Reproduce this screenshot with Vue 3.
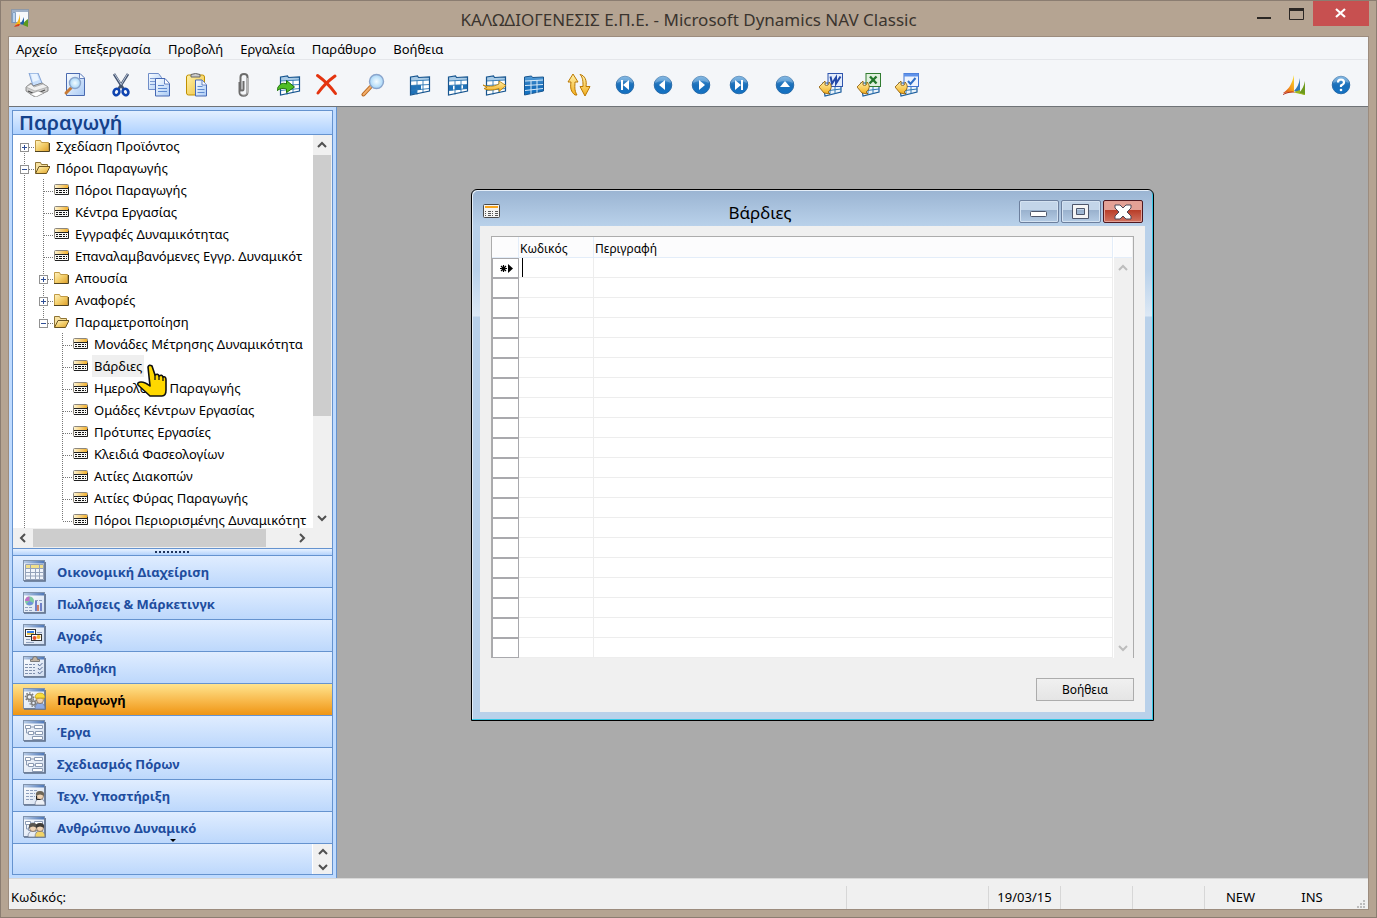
<script setup>
import { ref } from 'vue'

const menus = ['Αρχείο', 'Επεξεργασία', 'Προβολή', 'Εργαλεία', 'Παράθυρο', 'Βοήθεια']

const toolGroups = [
  ['print', 'preview'],
  ['cut', 'copy', 'paste'],
  ['clip'],
  ['insert', 'remove'],
  ['find'],
  ['tableFirst', 'tableMiddle', 'tableJump', 'tableFull'],
  ['refresh'],
  ['first', 'prev', 'next', 'last'],
  ['up'],
  ['word', 'excel', 'task'],
]

const names = {
  print: 'Εκτύπωση', preview: 'Προεπισκόπηση', cut: 'Αποκοπή', copy: 'Αντιγραφή', paste: 'Επικόλληση',
  clip: 'Συνημμένα', insert: 'Εισαγωγή', remove: 'Διαγραφή', find: 'Εύρεση', tableFirst: 'Φίλτρο πεδίου',
  tableMiddle: 'Φίλτρο πίνακα', tableJump: 'Φίλτρο ροής', tableFull: 'Εμφάνιση όλων', refresh: 'Ανανέωση',
  first: 'Πρώτο', prev: 'Προηγούμενο', next: 'Επόμενο', last: 'Τελευταίο', up: 'Λίστα',
  word: 'Word', excel: 'Excel', task: 'Εργασία',
}

const grid = (fill) => `
  <path d="M3.500 4l7-1 1 1.500 11-.5v14L3.500 22z" fill="#fff"/>
  <path d="M3.500 4l7-1 1 1.500 11-.5v3L3.500 8z" fill="#a9cbe6"/>
  ${fill}
  <path d="M3.500 8l19-1M3.500 12.500l19-1M3.500 17.500l19-2M10 7.500v14M16 7v13" fill="none" stroke="#2f78b4" stroke-width=".9"/>
  <path d="M3.500 4l7-1 1 1.500 11-.5v14L3.500 22z" fill="none" stroke="#17558f" stroke-width="1.200"/>`
const miniGrid = `
  <path d="M4 10h18v9L6 23z" fill="#eaf3fb" stroke="#1b5c9c" stroke-width="1.200"/>
  <path d="M6 18l16-2M11 12v10M16 12v9" stroke="#2f78b4" fill="none"/>`
const backArrow = `<path d="M0 14l6-6v4c3 1 4 0 4-3 4 4 2 8-1 10l2 2-6-1-5-6z" fill="url(#gold)" stroke="#8a5600" stroke-width=".8"/>`
const ball = '<circle cx="12" cy="12" r="8.800" fill="url(#ball)" stroke="#1a5e9e" stroke-width=".8"/><path d="M4 10a8 8 0 0 1 16 0q-8-4-16 0z" fill="#fff" opacity=".25"/>'
const lens = (x, y, r) => `<circle cx="${x}" cy="${y}" r="${r}" fill="url(#glass)" stroke="#8aa5cc" stroke-width="1.400"/>`

const icons = {
  print: `<path d="M4 0h9l4 10-9 3z" fill="#c7defb" stroke="#6f92cc" stroke-width=".8"/><path d="M6 1h6l2 6-6 2z" fill="#eaf4ff"/>
    <path d="M1 14l5-4 2 3 9-3 6 4v4l-13 6-9-6z" fill="#cfcfcf" stroke="#777" stroke-width=".8"/>
    <path d="M1 14l9 4 13-4-5-3-9 3-3-3z" fill="#f0f0f0" stroke="#999" stroke-width=".6"/>
    <path d="M3 18l7 3 10-4" fill="none" stroke="#4c4c4c" stroke-width="1.300"/><path d="M5 21l8-3 6 2-8 4z" fill="#fff" stroke="#888" stroke-width=".6"/>`,
  preview: `<path d="M3.500.5H17l4.500 4.500v17.500h-18z" fill="url(#page)" stroke="#4a6ab0"/><path d="M16.500 1v4.500h5" fill="#f5f9ff" stroke="#4a6ab0" stroke-width=".8"/>
    <path d="M8 15l-5 5" stroke="#c87a34" stroke-width="3" stroke-linecap="round"/>${lens(12, 10, 5.5)}`,
  cut: `<path d="M5 1l9.500 15M19 1L9.500 16" stroke="#43536f" stroke-width="2.600"/><path d="M5.500 1l7 11M18.500 1l-6 10" stroke="#c6d2e4" stroke-width=".9"/>
    <ellipse cx="7.500" cy="19" rx="2.800" ry="3.200" fill="none" stroke="#0f44b0" stroke-width="2.600" transform="rotate(30 7.500 19)"/>
    <ellipse cx="16.500" cy="19" rx="2.800" ry="3.200" fill="none" stroke="#0f44b0" stroke-width="2.600" transform="rotate(-30 16.500 19)"/>`,
  copy: `<path d="M1.500.5h10l3 4v12h-13z" fill="url(#page)" stroke="#6f8dc8"/><path d="M3 5.500h7M3 8.500h5M3 11.500h5" stroke="#7a9ad2"/>
    <path d="M8.500 5.500H18l4.500 5v12.500h-14z" fill="url(#page)" stroke="#4668b4"/><path d="M17.500 6v5h5" fill="#fff" stroke="#4668b4" stroke-width=".8"/><path d="M11 12.500h6M11 15.500h9M11 18.500h9" stroke="#5f8ad0"/>`,
  paste: `<rect x="1.500" y="2" width="18" height="20" rx="2" fill="url(#clipboard)" stroke="#c09000"/><path d="M6 4V1.500q4.500-2 9 0V4z" fill="#ccc" stroke="#666"/>
    <path d="M10.500 7H17l4.500 5v11h-11z" fill="url(#page)" stroke="#4668b4"/><path d="M17 7.500V12h4.500" fill="#fff" stroke="#4668b4" stroke-width=".8"/><path d="M12.500 13.500h5M12.500 16.500h7M12.500 19.500h7" stroke="#5f8ad0"/>`,
  clip: `<path d="M12.500 8v8c0 2-3 2-3 0V4c0-4 7-4 7 0v15c0 5-8 5-8 0V9" fill="none" stroke="#6c6c6c" stroke-width="2"/><path d="M16.500 5v14c0 4-7 4-7 0" fill="none" stroke="#d5d5d5" stroke-width=".7"/>`,
  insert: `${grid('')}<path d="M-.5 18c2-7 6-9 10-7V7.500l8 6.500-8 5.500V16c-3-1-6-1-10 2z" fill="#4fbe24" stroke="#1f720a"/>`,
  remove: `<path d="M2.500 2.500c7 5 13 11 18 18M20 3C13 8 8 13 3 20" fill="none" stroke="#e43410" stroke-width="3" stroke-linecap="round"/>`,
  find: `<path d="M9.500 14l-7 7.500" stroke="#b5651e" stroke-width="4" stroke-linecap="round"/><path d="M9.500 14l-7 7.500" stroke="#f3ad69" stroke-width="2" stroke-linecap="round"/>${lens(15.5, 8.5, 7)}`,
  tableFirst: grid('<path d="M4 12.500l6-.5v8.500l-6 1zM10 12h4v5h-4z" fill="#1f72b8"/>'),
  tableMiddle: grid('<path d="M4 12.500h4v5H4zM10 12h6v5h-6zM18 12h4v4h-4z" fill="#1f72b8"/>'),
  tableJump: `${grid('')}<path d="M0 12c5 2 10 2 16-1V8l7 4.500-7 6v-3c-6 2-12 2-15 0l3-1z" fill="url(#gold)" stroke="#b87b00" stroke-width=".8"/>`,
  tableFull: `<path d="M3.500 4l7-1 1 1.500 11-.5v14L3.500 22z" fill="url(#ball)" stroke="#17558f"/><path d="M4 8l18-1M4 12.500l18-1M4 17.500l18-2M10 7.500v14M16 7v13" fill="none" stroke="#d6eaf9"/>`,
  refresh: `<path d="M6 1L1 9h3c-1 6 0 10 4 13h2C7 17 8 13 8 9h3z" fill="url(#gold)" stroke="#bb7800"/>
    <path d="M13 1.500c5 1 7 6 6 12h4L18 23l-5-9.500h3c0-5 0-9-3-12z" fill="url(#gold)" stroke="#bb7800"/>`,
  first: `${ball}<path d="M8 7h2v10H8zM16 7v10l-6-5z" fill="#fff"/>`,
  prev: `${ball}<path d="M14 7v10l-6-5z" fill="#fff"/>`,
  next: `${ball}<path d="M10 7v10l6-5z" fill="#fff"/>`,
  last: `${ball}<path d="M14 7h2v10h-2zM8 7v10l6-5z" fill="#fff"/>`,
  up: `${ball}<path d="M7 14h10l-5-6z" fill="#fff"/>`,
  word: `${miniGrid}<rect x="9" y=".5" width="14.500" height="13" fill="#e3ecfb" stroke="#2f55ad"/><path d="M11.500 3.500l1.500 7 4-6v6l4.500-7" fill="none" stroke="#2449a8" stroke-width="2"/>${backArrow}`,
  excel: `${miniGrid}<rect x="9" y=".5" width="14.500" height="13" fill="#e0f0de" stroke="#317c31"/><path d="M13 3.500l6.500 7M19.500 3.500l-7 7" stroke="#24772b" stroke-width="2.400"/>${backArrow}`,
  task: `${miniGrid}<rect x="9" y=".5" width="14.500" height="13" fill="#eef4fd" stroke="#3f73d0"/><path d="M9 .5h14.500v3H9z" fill="#5f92ea"/><path d="M13 8l2.500 3 5-6" fill="none" stroke="#2f6fc8" stroke-width="2"/>${backArrow}`,
  dynamics: `<path d="M1 20c6-4 9-9 11-18v17z" fill="url(#sail)"/><path d="M12 18c3-3 5-7 6-13v15z" fill="#2f78b8"/><path d="M17 20c3-3 5-7 6-12v14z" fill="#6d9a1c"/><path d="M1 21c4-2 8-3 11-2l2 1c-5-1-9 0-13 2z" fill="#b5301a"/><path d="M12 19l6-2v3l5 1v1l-9-2z" fill="#9cb81c"/>`,
  help: `${ball}<path d="M9 9.500q0-3 3-3t3 3q0 1.500-3 3V14" fill="none" stroke="#fff" stroke-width="2.200"/><circle cx="12" cy="17" r="1.300" fill="#fff"/>`,
}

const tree = [
  { level: 0, kind: 'closed', text: 'Σχεδίαση Προϊόντος', start: true },
  { level: 0, kind: 'open', text: 'Πόροι Παραγωγής' },
  { level: 1, kind: 'form', text: 'Πόροι Παραγωγής' },
  { level: 1, kind: 'form', text: 'Κέντρα Εργασίας' },
  { level: 1, kind: 'form', text: 'Εγγραφές Δυναμικότητας' },
  { level: 1, kind: 'form', text: 'Επαναλαμβανόμενες Εγγρ. Δυναμικότ' },
  { level: 1, kind: 'closed', text: 'Απουσία' },
  { level: 1, kind: 'closed', text: 'Αναφορές' },
  { level: 1, kind: 'open', text: 'Παραμετροποίηση', end: true },
  { level: 2, kind: 'form', text: 'Μονάδες Μέτρησης Δυναμικότητα' },
  { level: 2, kind: 'form', text: 'Βάρδιες', selected: true },
  { level: 2, kind: 'form', text: 'Ημερολόγια Παραγωγής' },
  { level: 2, kind: 'form', text: 'Ομάδες Κέντρων Εργασίας' },
  { level: 2, kind: 'form', text: 'Πρότυπες Εργασίες' },
  { level: 2, kind: 'form', text: 'Κλειδιά Φασεολογίων' },
  { level: 2, kind: 'form', text: 'Αιτίες Διακοπών' },
  { level: 2, kind: 'form', text: 'Αιτίες Φύρας Παραγωγής' },
  { level: 2, kind: 'form', text: 'Πόροι Περιορισμένης Δυναμικότητ', end: true },
]

const nodeIcons = {
  closed: '<path d="M1.500 2.500h5l1 2h7v9h-13z" fill="url(#folder)" stroke="#c09a45"/><path d="M1 13.500h14.500V5" fill="none" stroke="#4f4220"/>',
  open: '<path d="M1.500 13V2.500h5l1 2h6V7" fill="#f7e1a0" stroke="#8f7434"/><path d="M1.500 13.500L5 6.500h11l-3.500 7z" fill="url(#folder)" stroke="#6b5420"/>',
  form: '<rect x="1.500" y="2.500" width="14" height="10" rx="1" fill="#f8f8f6" stroke="#8d877c"/><path d="M2 3h13v3H2z" fill="url(#amber)"/><path d="M2 12.500h13.500V5M2 6.500h13" fill="none" stroke="#222"/><path d="M3 8.500h11M3 10.500h11" stroke="#111" stroke-dasharray="2 1 3 1"/>',
}

const sheet = `<rect x=".5" y=".5" width="21" height="20" fill="url(#sheet)" stroke="#8093ad"/><path d="M1 1h20v2.500H1z" fill="url(#sheetbar)"/><path d="M1 21.200h21.200V2" fill="none" stroke="#5c6d88" stroke-width="1.300"/>`
const flow = `<path d="M2.500 5.500h5v3h-5zM11.500 5.500h8v3h-8zM5.500 11.500h5v3h-5zM12.500 11.500h7v3h-7zM9.500 16.500h10v3h-10z" fill="#fff" stroke="#8c9bb3"/><path d="M8 7h3M3.500 9v4h2M10.500 13h2" stroke="#8c9bb3" fill="none"/>`
const person = (x, y, hair, coat) => `<path d="M${x - 5} ${y + 9}q0-6 5-6t5 6z" fill="${coat}" stroke="#6e7890" stroke-width=".7"/><circle cx="${x}" cy="${y}" r="3.500" fill="#efd3b4" stroke="#5c4a3a" stroke-width=".6"/><path d="M${x - 4} ${y}q-1-5 4-5t4 5q-4-3-8 0z" fill="${hair}"/>`

const areas = ref([
  { text: 'Οικονομική Διαχείριση', icon: `${sheet}<path d="M2.500 5.500h18v14h-18z" fill="#f1f5fb"/><path d="M2 5h18v3H2z" fill="#f2e08a"/><path d="M2.500 4.500h18v15h-18zM2.500 8.500h18M2.500 12.500h18M2.500 16h18M7.500 5v14M12.500 8v11M16.500 5v14" fill="none" stroke="#94a2b9"/>` },
  { text: 'Πωλήσεις & Μάρκετινγκ', icon: `${sheet}<circle cx="6.500" cy="9" r="4.500" fill="#7fc9a0"/><path d="M6.500 9V4.500A4.500 4.500 0 0 0 2 9z" fill="#c06fc8"/><path d="M6.500 9l4 2a4.500 4.500 0 0 1-7 1z" fill="#6f8fe0"/><path d="M12 8.500h7M2 15.500h8M2 18.500h8" stroke="#8fa0bd" stroke-dasharray="3 1"/><path d="M12 9h2v10h-2zM17 11h2v8h-2z" fill="#6f80c8"/><path d="M14 13h2v6h-2z" fill="#d08068"/>` },
  { text: 'Αγορές', icon: `${sheet}<rect x="2.500" y="5.500" width="10" height="7" fill="#fff" stroke="#333"/><path d="M4 7h7v2H4z" fill="#3b7fe6"/><path d="M4 9h7v2H4z" fill="#f2c94c"/><rect x="8.500" y="10.500" width="10" height="6" fill="#fff" stroke="#333"/><circle cx="11.500" cy="14" r="2" fill="#e8522c"/><circle cx="15.500" cy="13" r="2" fill="#f2b430"/><path d="M14 8.500h5M3 15.500h4M3 18.500h8" stroke="#8fa0bd"/>` },
  { text: 'Αποθήκη', icon: `${sheet}<path d="M7.500 5.500v-2h2q0-3 2.500-3t2.500 3h2v2z" fill="#c3b5a4" stroke="#666" stroke-width=".8"/><path d="M2 8.500h10M2 11.500h10M2 14.500h10M2 17.500h10" stroke="#8090ad" stroke-dasharray="3 1"/><path d="M15 8l1.500 2 3-3M15 12l1.500 2 3-3M15 16l1.500 2 3-3" fill="none" stroke="#5a6d96"/>` },
  { text: 'Παραγωγή', active: true, icon: `${sheet}<circle cx="6.500" cy="9" r="2.500" fill="none" stroke="#7c7c7c" stroke-width="1.500"/><circle cx="6.500" cy="9" r="4" fill="none" stroke="#7c7c7c" stroke-width="1.500" stroke-dasharray="1.500 1.500"/><circle cx="10.500" cy="15" r="2" fill="none" stroke="#7c7c7c" stroke-width="1.500"/><circle cx="10.500" cy="15" r="3.500" fill="none" stroke="#7c7c7c" stroke-width="1.200" stroke-dasharray="1.500 1.500"/>${person(17, 12, '#d8b040', '#8fabe4')}<path d="M12 10q0-5 5-5t5 5z" fill="#f8dc3c" stroke="#b08c10" stroke-width=".6"/>` },
  { text: 'Έργα', icon: sheet + flow },
  { text: 'Σχεδιασμός Πόρων', icon: sheet + flow },
  { text: 'Τεχν. Υποστήριξη', icon: `${sheet}<path d="M3 6.500h11M3 9.500h9M3 12.500h9M3 15.500h8" stroke="#8fa0bd" stroke-dasharray="3 1"/>${person(17, 12, '#6e6658', '#eef1f6')}<path d="M13.500 12v3.500h4" fill="none" stroke="#222"/>` },
  { text: 'Ανθρώπινο Δυναμικό', icon: `${sheet}${flow}${person(10, 12, '#5a564f', '#e8edf5')}${person(17, 12, '#3d3a36', '#f2d468')}` },
])

const pick = (area) => areas.value.forEach((a) => { a.active = a === area })

const chevrons = {
  up: 'M1 7l4-4 4 4',
  down: 'M1 3l4 4 4-4',
  left: 'M7 1L3 5l4 4',
  right: 'M3 1l4 4-4 4',
}
const code = ref('')
</script>

<template>
  <div class="window">
    <svg class="defs" width="0" height="0" aria-hidden="true">
      <defs>
        <linearGradient id="ball" x1="0" y1="0" x2="0" y2="1"><stop offset="0" stop-color="#5aa2dc" /><stop offset=".5" stop-color="#1a6fba" /><stop offset="1" stop-color="#1272c4" /></linearGradient>
        <linearGradient id="gold" x1="0" y1="0" x2="0" y2="1"><stop offset="0" stop-color="#fff3b0" /><stop offset="1" stop-color="#f3ae1c" /></linearGradient>
        <linearGradient id="amber" x1="0" y1="0" x2="1" y2="0"><stop offset="0" stop-color="#fdf3cf" /><stop offset="1" stop-color="#f2b02e" /></linearGradient>
        <linearGradient id="page" x1="0" y1="0" x2="1" y2="1"><stop offset="0" stop-color="#fafdff" /><stop offset="1" stop-color="#a9caf5" /></linearGradient>
        <linearGradient id="clipboard" x1="0" y1="0" x2="1" y2="1"><stop offset="0" stop-color="#fff2a8" /><stop offset="1" stop-color="#eebf3c" /></linearGradient>
        <radialGradient id="glass"><stop offset="0" stop-color="#f4fcff" /><stop offset="1" stop-color="#a6d5f7" /></radialGradient>
        <linearGradient id="sail" x1="0" y1="1" x2="1" y2="0"><stop offset="0" stop-color="#c8381c" /><stop offset=".4" stop-color="#f28c1c" /><stop offset="1" stop-color="#fbe02c" /></linearGradient>
        <linearGradient id="folder" x1="0" y1="0" x2="1" y2="1"><stop offset="0" stop-color="#fff3c4" /><stop offset=".5" stop-color="#f3cf6c" /><stop offset="1" stop-color="#dfa02a" /></linearGradient>
        <linearGradient id="sheet" x1="0" y1="0" x2="1" y2="1"><stop offset="0" stop-color="#ffffff" /><stop offset="1" stop-color="#d0ddf0" /></linearGradient>
        <linearGradient id="sheetbar" x1="0" y1="0" x2="1" y2="0"><stop offset="0" stop-color="#b7cbe6" /><stop offset="1" stop-color="#4f78b8" /></linearGradient>
      </defs>
    </svg>

    <header class="titlebar">
      <svg class="app-icon" viewBox="0 0 18 18">
        <rect x=".5" y=".5" width="17" height="13" fill="#f7f9fc" stroke="#8e99a8" /><path d="M1 1h16v2H1z" fill="#9eb0c8" /><path d="M1.500 3.500h3v10h-3z" fill="#b9d2ef" stroke="#6f8fb4" stroke-width=".8" />
        <path d="M4 16c3-3 4-6 5-11v11z" fill="#f5b81c" /><path d="M9 15c2-2 3-5 4-7v8z" fill="#1f5fa8" /><path d="M12 16c1-3 3-5 5-6v8z" fill="#5c9a1c" /><path d="M3 18c2-3 4-3 6-3l-1 2z" fill="#d6401c" />
      </svg>
      <h1 class="app-title">ΚΑΛΩΔΙΟΓΕΝΕΣΙΣ Ε.Π.Ε. - Microsoft Dynamics NAV Classic</h1>
      <div class="window-buttons">
        <button type="button" aria-label="Ελαχιστοποίηση"><svg viewBox="0 0 16 12"><path d="M0 9h14v2H0z" fill="#2b2724" /></svg></button>
        <button type="button" aria-label="Μεγιστοποίηση"><svg viewBox="0 0 16 12"><path d="M.5 1h14v10.500H.5z" fill="none" stroke="#2b2724" /><path d="M0 0h15v3H0z" fill="#2b2724" /></svg></button>
        <button type="button" class="close" aria-label="Κλείσιμο"><svg viewBox="0 0 16 12"><path d="M3 1l9 8M12 1l-9 8" stroke="#fff" stroke-width="2.200" /></svg></button>
      </div>
    </header>

    <div class="client">
      <nav class="menubar">
        <button v-for="m in menus" :key="m" type="button">{{ m }}</button>
      </nav>

      <div class="toolbar">
        <div v-for="(group, i) in toolGroups" :key="i" class="tool-group">
          <button v-for="name in group" :key="name" type="button" :aria-label="names[name]">
            <svg viewBox="0 0 24 24" v-html="icons[name]" />
          </button>
        </div>
        <div class="tool-group end">
          <button type="button" aria-label="Microsoft Dynamics"><svg viewBox="0 0 24 24" v-html="icons.dynamics" /></button>
          <button type="button" aria-label="Βοήθεια"><svg viewBox="0 0 24 24" v-html="icons.help" /></button>
        </div>
      </div>

      <div class="workspace">
        <aside class="sidebar">
          <div class="panel">
            <h2 class="panel-title">Παραγωγή</h2>
            <div class="tree-area">
              <ul class="tree">
                <li v-for="(node, i) in tree" :key="i" class="node">
                  <span v-for="n in node.level" :key="n" class="cell" :class="{ rail: n === 1 }" />
                  <span class="cell joint" :class="{ rail: !node.end, start: node.start, end: node.end }">
                    <button v-if="node.kind !== 'form'" type="button" class="expander" :class="node.kind" :aria-label="node.text" />
                  </span>
                  <svg class="node-icon" viewBox="0 0 16 16" v-html="nodeIcons[node.kind]" />
                  <span class="label" :class="{ selected: node.selected }">
                    {{ node.text }}
                    <svg v-if="node.selected" class="pointer" viewBox="0 0 30 33">
                      <path d="M11 3q1-3 4-1l3 9q3-2 4 1 3-2 4 1 3-1 3 3v10q0 6-4 6h-12L1 21q-1-3 3-3 4 0 9 4z" fill="#ffd800" stroke="#111" stroke-width="1.600" stroke-linejoin="round" />
                      <path d="M18 10v6M22 11v5M26 13v4" stroke="#111" stroke-width="1.300" />
                    </svg>
                  </span>
                </li>
              </ul>
              <div class="vscroll">
                <button type="button" aria-label="Πάνω"><svg viewBox="0 0 10 10"><path :d="chevrons.up" /></svg></button>
                <span class="vthumb" />
                <button type="button" aria-label="Κάτω"><svg viewBox="0 0 10 10"><path :d="chevrons.down" /></svg></button>
              </div>
            </div>
            <div class="hscroll">
              <button type="button" aria-label="Αριστερά"><svg viewBox="0 0 10 10"><path :d="chevrons.left" /></svg></button>
              <span class="htrack"><span class="hthumb" /></span>
              <button type="button" aria-label="Δεξιά"><svg viewBox="0 0 10 10"><path :d="chevrons.right" /></svg></button>
            </div>
            <div class="splitter"><span class="grip" /></div>
            <nav class="areas">
              <button v-for="area in areas" :key="area.text" type="button" :class="{ active: area.active }" @click="pick(area)">
                <svg viewBox="0 0 24 24" v-html="area.icon" />
                <span>{{ area.text }}</span>
              </button>
              <span class="more" />
            </nav>
            <div class="panel-foot">
              <div class="spinner">
                <button type="button" aria-label="Προηγούμενα"><svg viewBox="0 0 10 10"><path :d="chevrons.up" /></svg></button>
                <button type="button" aria-label="Επόμενα"><svg viewBox="0 0 10 10"><path :d="chevrons.down" /></svg></button>
              </div>
            </div>
          </div>
        </aside>

        <main class="desktop">
          <section class="dialog" aria-label="Βάρδιες">
            <header class="dialog-bar">
              <svg class="dialog-icon" viewBox="0 0 18 16"><rect x=".5" y="1.500" width="16" height="13" rx="1" fill="#f4f4f2" stroke="#4a4a4a" /><path d="M2 3h13v2H2z" fill="#f9a51c" /><path d="M2 8.500h13M2 10.500h13M2 12.500h13" stroke="#555" stroke-dasharray="1 2 3 1" /></svg>
              <h2>Βάρδιες</h2>
              <div class="dialog-buttons">
                <button type="button" aria-label="Ελαχιστοποίηση"><svg viewBox="0 0 20 18"><rect x="1.500" y="8.500" width="16" height="5" rx="1" fill="#fff" stroke="#4d566b" /></svg></button>
                <button type="button" aria-label="Μεγιστοποίηση"><svg viewBox="0 0 20 18"><path d="M1.500 1.500h16v14h-16zM5.500 5.500v6h8v-6z" fill="#f5f5f5" fill-rule="evenodd" stroke="#4d566b" /></svg></button>
                <button type="button" class="close" aria-label="Κλείσιμο"><svg viewBox="0 0 20 18"><path d="M2 2h5l3 3 3-3h5v3l-4 4 4 4v3h-5l-3-3-3 3H2v-3l4-4-4-4z" fill="#fff" stroke="#4d4858" stroke-linejoin="round" /></svg></button>
              </div>
            </header>
            <div class="dialog-body">
              <div class="list">
                <table>
                  <thead>
                    <tr><th class="marker" /><th class="code">Κωδικός</th><th>Περιγραφή</th></tr>
                  </thead>
                  <tbody>
                    <tr v-for="r in 20" :key="r">
                      <td class="marker">
                        <svg v-if="r === 1" viewBox="0 0 14 10"><path d="M3.500 2v7M0 5.500h7M1 3l5 5M6 3L1 8" stroke="#000" stroke-width="1.200" /><path d="M8 1v9l5-4.500z" /></svg>
                      </td>
                      <td class="code">
                        <template v-if="r === 1"><input v-model="code" type="text" aria-label="Κωδικός" /><span class="caret" /></template>
                      </td>
                      <td />
                    </tr>
                  </tbody>
                </table>
                <div class="list-scroll">
                  <span class="scroll-head" />
                  <button type="button" aria-label="Πάνω"><svg viewBox="0 0 10 10"><path :d="chevrons.up" /></svg></button>
                  <button type="button" aria-label="Κάτω"><svg viewBox="0 0 10 10"><path :d="chevrons.down" /></svg></button>
                </div>
              </div>
              <button type="button" class="help">Βοήθεια</button>
            </div>
          </section>
        </main>
      </div>

      <footer class="statusbar">
        <span class="prompt">Κωδικός:</span>
        <span class="pane wide" /><span class="pane">19/03/15</span><span class="pane" /><span class="pane" />
        <span class="pane">NEW</span><span class="pane open">INS</span>
        <svg class="size-grip" viewBox="0 0 9 9"><path d="M6 0h2v2H6zM6 3h2v2H6zM3 3h2v2H3zM6 6h2v2H6zM3 6h2v2H3zM0 6h2v2H0z" fill="#bcbcbc" /></svg>
      </footer>
    </div>
  </div>
</template>

<style>
body { overflow: hidden; }
</style>

<style scoped>
* { box-sizing: border-box; }
.window {
  display: flex; flex-direction: column; height: 100vh; padding: 0 7px 7px;
  border: 1px solid #8b7d71; background: #b5a492; color: #000;
  font: 13px/18px "Noto Sans", "Open Sans", sans-serif;
}
.defs { position: absolute; }
button { margin: 0; padding: 0; border: 0; background: none; color: inherit; font: inherit; }
h1, h2 { margin: 0; font-weight: 400; }
svg { display: block; flex: none; }

.titlebar { display: grid; grid-template-columns: 1fr auto 1fr; flex: none; height: 35px; }
.app-icon { width: 18px; height: 18px; margin: 8px 0 0 3px; }
.app-title { font-size: 17px; line-height: 37px; color: #3a342e; white-space: nowrap; }
.window-buttons { display: flex; justify-content: flex-end; height: 25px; }
.window-buttons button { display: flex; align-items: center; justify-content: center; width: 32px; }
.window-buttons svg { width: 16px; height: 12px; }
.window-buttons .close { width: 56px; background: #c75050; }

.client { display: flex; flex: 1; flex-direction: column; min-height: 0; border: 1px solid #9c8c7e; background: #f4f6f9; }
.menubar { display: flex; flex: none; gap: 17px; height: 23px; padding-left: 7px; border-bottom: 1px solid #e4e6ea; }
.menubar button { height: 24px; white-space: nowrap; }
.toolbar { display: flex; flex: none; gap: 8px; height: 47px; padding: 4px 8px 0 9px; border-bottom: 1px solid #6f7377; }
.tool-group { display: flex; align-items: center; }
.tool-group button { display: flex; justify-content: center; width: 38px; }
.tool-group svg { width: 24px; height: 24px; }
.tool-group.end { gap: 9px; margin-left: auto; }

.workspace { display: flex; flex: 1; min-height: 0; }
.sidebar { display: flex; flex: none; width: 328px; padding: 3px; border-right: 1px solid #6593cf; background: #bfdbff; }
.panel { display: flex; flex: 1; flex-direction: column; min-width: 0; border: 1px solid #6593cf; }
.panel-title { flex: none; height: 24px; padding-left: 6px; border-bottom: 1px solid #6593cf; background: linear-gradient(#e3efff, #afd2ff); color: #15428b; font-size: 20px; font-weight: 600; line-height: 24px; }
.tree-area { display: flex; flex: 1; min-height: 0; background: #fff; }
.tree { flex: 1; min-width: 0; margin: 0; padding: 0 0 0 2px; overflow: hidden; list-style: none; }
.node { display: flex; align-items: center; height: 22px; white-space: nowrap; }
.cell { position: relative; flex: none; width: 19px; height: 22px; }
.rail { background: repeating-linear-gradient(#777 0 1px, transparent 1px 2px) 9px 0 / 1px 100% no-repeat; }
.joint.end { background: repeating-linear-gradient(#777 0 1px, transparent 1px 2px) 9px 0 / 1px 12px no-repeat; }
.joint.start { background-position: 9px 12px; }
.joint::after { position: absolute; top: 12px; right: 0; width: 9px; height: 1px; background: repeating-linear-gradient(90deg, #777 0 1px, transparent 1px 2px); content: ""; }
.expander { position: absolute; z-index: 1; top: 8px; left: 5px; width: 9px; height: 9px; border: 1px solid #919191; background: linear-gradient(#2f4f96, #2f4f96) 1px 3px / 5px 1px no-repeat, #fff; }
.expander.closed { background: linear-gradient(#2f4f96, #2f4f96) 1px 3px / 5px 1px no-repeat, linear-gradient(#2f4f96, #2f4f96) 3px 1px / 1px 5px no-repeat, #fff; }
.node-icon { width: 16px; height: 16px; margin-right: 4px; }
.label { position: relative; padding: 0 2px; line-height: 22px; }
.label.selected { background: #efefef; }
.pointer { position: absolute; z-index: 2; top: 9px; left: 45px; width: 30px; height: 33px; }

.vscroll, .hscroll, .spinner { background: #f0f0f0; }
.vscroll svg, .hscroll svg, .spinner svg, .list-scroll svg { width: 10px; height: 10px; fill: none; stroke: #505050; stroke-width: 2; }
.vscroll button, .hscroll button, .spinner button, .list-scroll button { display: flex; align-items: center; justify-content: center; }
.vscroll { display: flex; flex: none; flex-direction: column; width: 19px; }
.vscroll button { height: 20px; width: 18px; }
.vscroll button:last-child { margin-top: auto; }
.vthumb { flex: none; width: 18px; height: 74%; max-height: 261px; background: #cdcdcd; }
.hscroll { display: flex; flex: none; height: 20px; padding-right: 20px; }
.hscroll button { width: 20px; height: 19px; }
.htrack { flex: 1; padding-top: 1px; }
.hthumb { display: block; width: 90%; height: 18px; background: #cdcdcd; }
.splitter { display: flex; flex: none; justify-content: center; align-items: center; height: 8px; border: solid #6593cf; border-width: 1px 0; background: linear-gradient(#e8f2ff, #b4d3fc); }
.grip { width: 35px; height: 2px; background: repeating-linear-gradient(90deg, #20355c 0 2px, transparent 2px 4px); }

.areas { position: relative; flex: none; }
.areas button { display: flex; gap: 10px; align-items: center; width: 100%; height: 32px; padding-left: 10px; border-bottom: 1px solid #6593cf; background: linear-gradient(#e0edff, #bdd8fc); color: #204d9e; font-weight: 700; text-align: left; }
.areas svg { width: 24px; height: 24px; }
.areas .active { background: linear-gradient(#ffe48e, #f8b84a 55%, #ef9514); color: #000; }
.more { position: absolute; bottom: 2px; left: 157px; border: solid transparent; border-width: 3px 3px 0; border-top-color: #000; }
.panel-foot { display: flex; flex: none; justify-content: flex-end; height: 30px; background: linear-gradient(#e0edff, #bdd8fc); }
.spinner { display: flex; flex-direction: column; width: 20px; border-left: 1px solid #fff; }
.spinner button { flex: 1; }

.desktop { position: relative; flex: 1; min-width: 0; overflow: hidden; background: #ababab; }
.dialog { position: absolute; top: 82px; left: 134px; width: 683px; padding: 0 8px 8px; border: 1px solid #000; border-radius: 6px 6px 0 0; background: linear-gradient(#9ab4d2, #b9d1ea 36px, #b9d1ea 80px, #dce8f5 126px, #b9d1ea 127px); box-shadow: inset -1px -1px #35c6e4, inset 1px 1px #e4eef8; }
.dialog-bar { display: flex; height: 36px; }
.dialog-icon { width: 18px; height: 16px; margin: 13px 0 0 3px; }
.dialog-bar h2 { flex: 1; font-size: 17px; line-height: 45px; text-align: center; }
.dialog-buttons { display: flex; gap: 2px; justify-content: flex-end; padding: 10px 2px 0 0; }
.dialog-buttons button { display: flex; align-items: center; justify-content: center; width: 40px; height: 23px; border: 1px solid #6c7f9d; border-radius: 2px; background: linear-gradient(#c3d5e9 0 45%, #9ab2ce 45%, #b4cbe4); box-shadow: inset 0 0 0 1px #d4e2f1; }
.dialog-buttons .close { border-color: #4f1820; background: linear-gradient(#e4a196 0 45%, #b93e29 45%, #d17260); box-shadow: inset 0 0 0 1px #e2a197; }
.dialog-buttons svg { width: 20px; height: 18px; }
.dialog-body { display: flex; flex-direction: column; gap: 20px; padding: 10px 11px 11px; background: #f0f0f0; font-size: 12px; }
.list { display: flex; border: solid #acacac; border-width: 1px 1px 0; background: #fff; }
table { flex: 1; border-collapse: separate; border-spacing: 0; table-layout: fixed; }
th, td { height: 20px; padding: 0; border-right: 1px solid #ededed; border-bottom: 1px solid #ededed; line-height: 18px; }
th { height: 21px; padding: 3px 0 0 1px; border-color: #e3edf9; background: #fcfcfd; font-weight: 400; line-height: 17px; text-align: left; }
th.marker { width: 27px; }
th.code { width: 75px; }
td.marker { border: 1px solid #a9a9ad; }
td.marker svg { width: 14px; height: 10px; margin-left: 7px; }
td.code { position: relative; }
td input { display: block; width: 100%; height: 19px; padding: 0 3px; border: 0; outline: 0; background: none; font: inherit; }
.caret { position: absolute; top: 0; left: 3px; width: 1px; height: 19px; background: #000; }
.list-scroll { display: flex; flex: none; flex-direction: column; width: 20px; padding-right: 2px; border-left: 1px solid #fff; background: #f0f0f0; }
.list-scroll svg { stroke: #bdbdbd; }
.scroll-head { height: 21px; margin-right: -1px; border-bottom: 1px solid #e3edf9; background: #fcfcfd; }
.list-scroll button { height: 20px; }
.list-scroll button:last-child { margin-top: auto; }
.help { align-self: flex-end; width: 98px; height: 23px; border: 1px solid #acacac; background: linear-gradient(#f0f0f0, #e5e5e5); }

.statusbar { display: flex; flex: none; height: 31px; padding-top: 7px; border-top: 1px solid #d7d7d7; background: #f0f0f0; line-height: 23px; }
.prompt { flex: 1; padding-left: 2px; }
.pane { width: 72px; border-left: 1px solid #d7d7d7; text-align: center; }
.pane.wide { width: 142px; }
.pane.open { border-left: 0; }
.size-grip { align-self: flex-end; width: 9px; height: 9px; margin: 0 2px 0 9px; }
</style>
